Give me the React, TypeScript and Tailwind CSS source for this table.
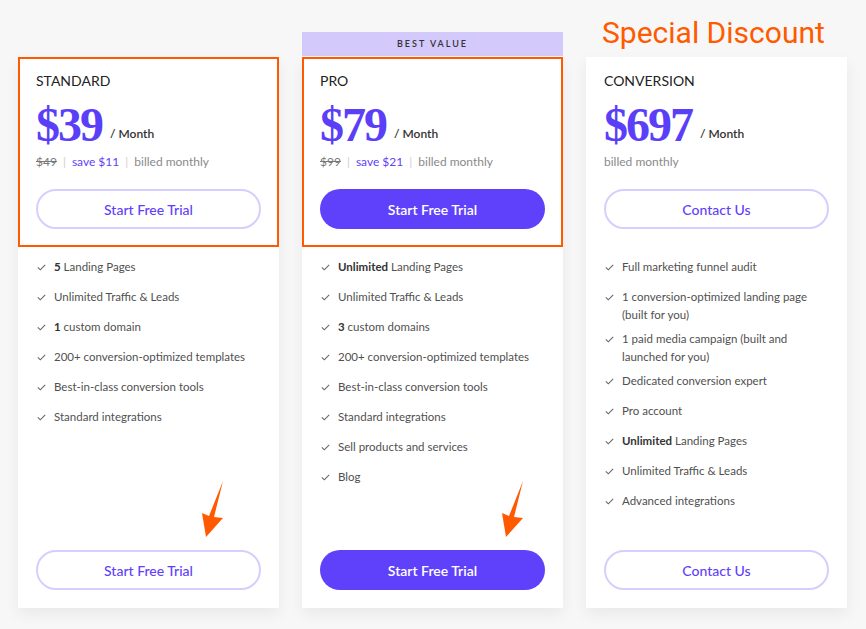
type Feature = { bold?: string; text: string; second?: string };

type Plan = {
  name: string;
  price: string;
  oldPrice?: string;
  save?: string;
  cta: string;
  primary?: boolean;
  highlight?: boolean;
  arrowLeft?: string;
  features: Feature[];
};

const plans: Plan[] = [
  {
    name: "STANDARD",
    price: "$39",
    oldPrice: "$49",
    save: "save $11",
    cta: "Start Free Trial",
    highlight: true,
    arrowLeft: "left-[182px]",
    features: [
      { bold: "5", text: " Landing Pages" },
      { text: "Unlimited Traffic & Leads" },
      { bold: "1", text: " custom domain" },
      { text: "200+ conversion-optimized templates" },
      { text: "Best-in-class conversion tools" },
      { text: "Standard integrations" },
    ],
  },
  {
    name: "PRO",
    price: "$79",
    oldPrice: "$99",
    save: "save $21",
    cta: "Start Free Trial",
    primary: true,
    highlight: true,
    arrowLeft: "left-[198px]",
    features: [
      { bold: "Unlimited", text: " Landing Pages" },
      { text: "Unlimited Traffic & Leads" },
      { bold: "3", text: " custom domains" },
      { text: "200+ conversion-optimized templates" },
      { text: "Best-in-class conversion tools" },
      { text: "Standard integrations" },
      { text: "Sell products and services" },
      { text: "Blog" },
    ],
  },
  {
    name: "CONVERSION",
    price: "$697",
    cta: "Contact Us",
    features: [
      { text: "Full marketing funnel audit" },
      { text: "1 conversion-optimized landing page", second: "(built for you)" },
      { text: "1 paid media campaign (built and", second: "launched for you)" },
      { text: "Dedicated conversion expert" },
      { text: "Pro account" },
      { bold: "Unlimited", text: " Landing Pages" },
      { text: "Unlimited Traffic & Leads" },
      { text: "Advanced integrations" },
    ],
  },
];

function Check() {
  return (
    <svg width="9" height="7" viewBox="0 0 9 7" className="mt-[6px] ml-[1px]">
      <path d="M0.8 3.4 L3.3 5.8 L8.2 0.8" fill="none" stroke="#666" strokeWidth="1.1" />
    </svg>
  );
}

function Arrow() {
  return (
    <svg width="26" height="60" viewBox="0 0 26 60">
      <polygon points="23,1 14,37 23,38 6,57 2,33 9,36" fill="#ff5a00" />
    </svg>
  );
}

function CtaButton({ label, primary }: { label: string; primary?: boolean }) {
  const base =
    "w-[225px] h-[40px] rounded-full text-[14px] flex items-center justify-center";
  if (primary) {
    return <button className={`${base} bg-[#5f41fb] text-white font-semibold`}>{label}</button>;
  }
  return (
    <button className={`${base} bg-white text-[#5f41fb] border-2 border-[#d6cefc] font-medium`}>
      {label}
    </button>
  );
}

function PlanCard({ plan }: { plan: Plan }) {
  return (
    <div className="relative bg-white h-[551px] flex flex-col shadow-[0_6px_14px_rgba(0,0,0,0.06)]">
      <div
        className={`h-[190px] border-2 px-[16px] pt-[12px] ${
          plan.highlight ? "border-[#ff5a00]" : "border-transparent"
        }`}
      >
        <div className="text-[14px] leading-[20px] text-[#222]">{plan.name}</div>
        <div className="mt-[10px] flex items-end gap-[8px]">
          <span
            className="text-[48px] leading-[48px] font-bold text-[#5a3ef8] tracking-[-2px]"
            style={{ fontFamily: '"Liberation Serif", serif' }}
          >
            {plan.price}
          </span>
          <span className="text-[12px] font-semibold text-[#333] mb-[6px]">/ Month</span>
        </div>
        <div className="mt-[5px] text-[12px] leading-[16px] flex items-center gap-[6px]">
          {plan.oldPrice && (
            <>
              <span className="line-through text-[#777]">{plan.oldPrice}</span>
              <span className="text-[#d0d0d0]">|</span>
              <span className="text-[#5f41fb]">{plan.save}</span>
              <span className="text-[#d0d0d0]">|</span>
            </>
          )}
          <span className="text-[#8a8a8a]">billed monthly</span>
        </div>
        <div className="mt-[19px]">
          <CtaButton label={plan.cta} primary={plan.primary} />
        </div>
      </div>
      <ul className="mt-[11px] px-[18px]">
        {plan.features.map((f, i) => (
          <li
            key={i}
            className={`flex gap-[8px] text-[11.5px] leading-[18px] text-[#505050] ${
              f.second ? "h-[42px]" : "h-[30px]"
            }`}
          >
            <span className="w-[10px] shrink-0">
              <Check />
            </span>
            <span className="whitespace-nowrap">
              {f.bold && <b className="font-bold text-[#333]">{f.bold}</b>}
              {f.text}
              {f.second && (
                <>
                  <br />
                  {f.second}
                </>
              )}
            </span>
          </li>
        ))}
      </ul>
      <div className="mt-auto px-[18px] pb-[18px]">
        <CtaButton label={plan.cta} primary={plan.primary} />
      </div>
    </div>
  );
}

export default function App() {
  return (
    <div
      className="w-[866px] h-[629px] bg-[#f7f7f7] flex gap-[23px] pl-[18px] overflow-hidden"
      style={{ fontFamily: 'Lato, "Liberation Sans", sans-serif' }}
    >
      {plans.map((plan, idx) => (
        <div key={plan.name} className="relative w-[261px] flex flex-col">
          <div className="h-[57px] flex items-end">
            {idx === 1 && (
              <div className="w-full h-[24px] mb-[1px] bg-[#d3c9fb] flex items-center justify-center text-[9px] font-semibold tracking-[2px] text-[#333]">
                BEST VALUE
              </div>
            )}
            {idx === 2 && (
              <div
                className="pl-[16px] pb-[7px] text-[30px] leading-[34px] text-[#ff5a00]"
                style={{ fontFamily: "Roboto, sans-serif" }}
              >
                Special Discount
              </div>
            )}
          </div>
          <PlanCard plan={plan} />
          {plan.arrowLeft && (
            <div className={`absolute top-[480px] ${plan.arrowLeft}`}>
              <Arrow />
            </div>
          )}
        </div>
      ))}
    </div>
  );
}
